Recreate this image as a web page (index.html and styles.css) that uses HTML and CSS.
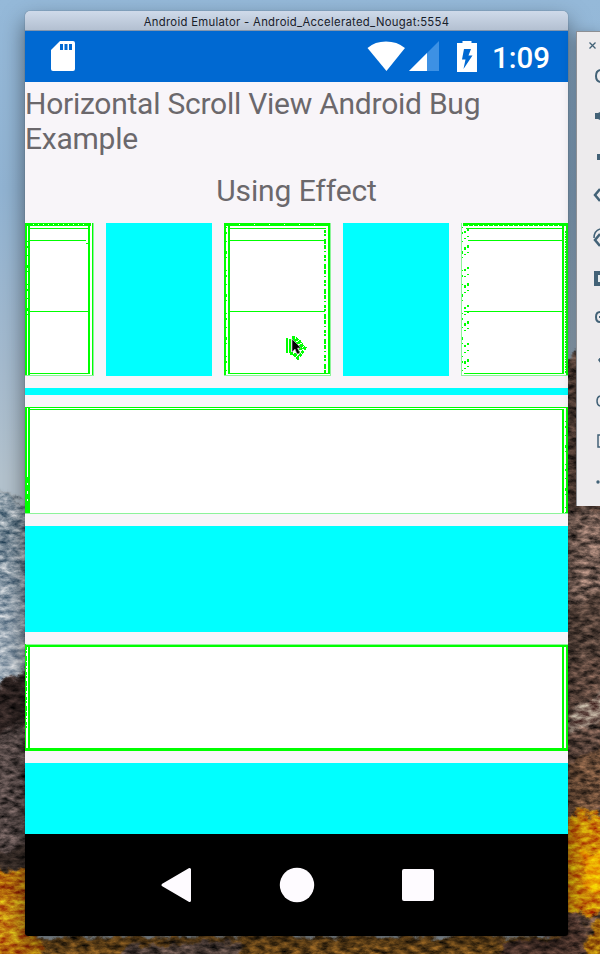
FILE: index.html
```html
<!DOCTYPE html>
<html lang="en">
<head>
<meta charset="utf-8">
<title>Android Emulator</title>
<link rel="stylesheet" href="styles.css">
</head>
<body>
<div class="desktop">
  <svg class="wallpaper" width="600" height="954" viewBox="0 0 600 954" aria-hidden="true">
    <defs>
      <linearGradient id="sky" x1="0" y1="0" x2="0" y2="1">
        <stop offset="0" stop-color="#95b9d9"/><stop offset=".2" stop-color="#91b3d2"/><stop offset=".38" stop-color="#a4bace"/><stop offset=".5" stop-color="#b3c2cd"/>
      </linearGradient>
      <linearGradient id="snow" x1="0" y1="0" x2="0" y2="1">
        <stop offset="0" stop-color="#a3b2bd"/><stop offset=".2" stop-color="#82939f"/><stop offset=".6" stop-color="#96a5b2"/><stop offset="1" stop-color="#b0bbc5"/>
      </linearGradient>
      <filter id="rough" x="0" y="0" width="100%" height="100%" color-interpolation-filters="sRGB">
        <feTurbulence type="fractalNoise" baseFrequency=".1 .2" numOctaves="5" seed="7"/>
        <feColorMatrix values="1.1 0 0 0 -.08  1.1 0 0 0 -.08  1.1 0 0 0 -.08  0 0 0 0 1" result="n"/>
        <feGaussianBlur in="SourceGraphic" stdDeviation="1.500" result="s"/>
        <feTurbulence type="fractalNoise" baseFrequency=".07" numOctaves="3" seed="3" result="w"/>
        <feDisplacementMap in="s" in2="w" scale="18" xChannelSelector="R" yChannelSelector="G" result="d"/>
        <feComposite in="n" in2="d" operator="in" result="m"/>
        <feBlend in="m" in2="d" mode="overlay"/>
      </filter>
    </defs>
    <rect width="600" height="954" fill="url(#sky)"/>
    <g filter="url(#rough)">
      <path d="M-20 478L10 496L35 514V700H-20Z" fill="url(#snow)"/>
      <path d="M-20 693L12 680L25 669L40 660V974H-20Z" fill="#574a48"/>
      <path d="M-20 695L12 682L25 674L40 670V720L-20 740Z" fill="#302523"/>
      <path d="M-20 850L40 845V870H-20Z" fill="#382d28"/>
      <path d="M550 375L569 362L576 352L620 335V974H550Z" fill="#60493f"/>
      <path d="M558 510H620V590L558 615Z" fill="#7a6258"/>
      <path d="M558 616L620 580V650L558 670Z" fill="#57443b"/>
      <path d="M558 725L620 675V710L558 740Z" fill="#907c70"/>
      <path d="M558 765L620 735V805L558 820Z" fill="#70503a"/>
      <path d="M-20 936H620V974H-20Z" fill="#7d541e"/>
      <path d="M-20 866L14 871L40 869V974H-20Z" fill="#b9700d"/>
      <path d="M-20 910L35 895V940L-20 950Z" fill="#c88612"/>
      <path d="M558 822L582 812L620 820V905L588 917L558 908Z" fill="#cf8809"/>
      <path d="M584 855L620 835V897L584 890Z" fill="#edab03"/>
      <path d="M130 946L240 940V974H100Z" fill="#5e4c45"/>
      <path d="M558 912L582 912L586 974H500V940H558Z" fill="#51382f"/>
      <path d="M588 925L620 910V974H584Z" fill="#a56c0b"/>
    </g>
  </svg>

  <main class="window">
    <header class="titlebar">Android Emulator - Android_Accelerated_Nougat:5554</header>
    <div class="status">
      <svg class="sd" width="24" height="30" viewBox="0 0 24 30"><path fill="#fff" d="M9 0H22Q24 0 24 2V28Q24 30 22 30H2Q0 30 0 28V9Z"/><path fill="#0069d2" d="M9 3h3v6H9zm4.500 0h3v6h-3zM18 3h3v6h-3z"/></svg>
      <svg class="wifi" width="38" height="30" viewBox="0 0 38 30"><path fill="#fff" d="M.5 7Q8 .5 19 .5T38 7L19.500 30Z"/></svg>
      <svg class="cell" width="30" height="30" viewBox="0 0 30 30"><path fill="#3d91e4" d="M30 0V30H0Z"/><path fill="#fff" d="M18 12V30H0Z"/></svg>
      <svg class="battery" width="20" height="31" viewBox="0 0 20 31"><path fill="#fff" d="M5.500 0H14.500V2H20V31H0V2H5.500Z"/><path fill="#0069d2" d="M7 8H14L11.500 14.500H15.500L6.500 28L8.500 18.500H5Z"/></svg>
      <span class="clock">1:09</span>
    </div>
    <section class="screen">
      <h1 class="heading">Horizontal Scroll View Android Bug Example</h1>
      <h2 class="subheading">Using Effect</h2>
      <div class="tiles">
        <svg class="card" width="69" height="153" viewBox="0 0 69 153">
          <rect class="paper" width="69" height="153"/>
          <path class="pale" d="M68.500 0V152.500H0"/>
          <path class="line" d="M67.500 0V152M3 5.500H64M5 17.500H61M61 20.500H64M3 88.500H64M4 150.500H65"/>
          <path class="bold" d="M1 0V152M4 1V152M64 1V151"/>
          <path class="thick" d="M0 1.500H66"/>
          <path class="nick" d="M8 1.500H62"/>
          <path class="flecks" d="M2.500 18V92"/>
        </svg>
        <div class="aqua tile"></div>
        <svg class="card" width="107" height="153" viewBox="0 0 107 153">
          <rect class="paper" width="107" height="153"/>
          <path class="pale" d="M106.500 0V152.500H0V0"/>
          <path class="line" d="M4 5.500H102M4 17.500H102M4 88.500H101M4 150.500H105"/>
          <path class="bold" d="M1 0V152M5 1V151M105 0V151"/>
          <path class="thick" d="M0 1.500H106"/>
          <path class="nick wide" d="M15 1.500H100"/>
          <path class="flecks" d="M2.500 4V151"/>
          <path class="bold broken" d="M101 7V150"/>
          <g class="pointer">
            <path class="bold" d="M63 115V130M66 116V130"/>
            <path class="halo" d="M68 114L71 115L76 119L79 124L83 126M66 130L70 131L74 135L78 130L80 126M69 117L78 124L73 130"/>
            <path class="arrow" d="M68 116V129L71 126L73 131L76 130L73.500 125H77Z"/>
          </g>
        </svg>
        <div class="aqua tile"></div>
        <svg class="card" width="107" height="153" viewBox="0 0 107 153">
          <rect class="paper" width="107" height="153"/>
          <path class="pale" d="M.5 0V152.500H107"/>
          <path class="line" d="M5 5.500H101M7 17.500H101M3 88.500H102M3 150.500H102"/>
          <path class="bold" d="M102 1V151M106 0V152"/>
          <path class="thick" d="M2 1.500H107"/>
          <path class="nick" d="M7 2.500H98"/>
          <path class="flecks" d="M1.500 4V151"/>
          <path class="flecks second" d="M4 8V151M6.500 6V145"/>
          <path class="dots" d="M104.500 8V150"/>
        </svg>
      </div>
      <div class="aqua strip"></div>
      <svg class="card" width="543" height="107" viewBox="0 0 543 107">
        <rect class="paper" width="543" height="107"/>
        <path class="pale" d="M0 106.500H543"/>
        <path class="line" d="M0 .5H543M5 2.500H537"/>
        <path class="bold" d="M1 0V106M4 1V106M538 2V106M542 0V106"/>
        <path class="line" d="M2.500 70V76M2.500 78V84M2.500 87V92M2.500 94V106"/>
        <path class="flecks" d="M540.500 14V106"/>
      </svg>
      <div class="aqua block"></div>
      <svg class="card" width="543" height="107" viewBox="0 0 543 107">
        <rect class="paper" width="543" height="107"/>
        <path class="pale" d="M0 .5H543"/>
        <path class="line" d="M.5 0V107"/>
        <path class="bold" d="M0 2H542M4 2V105M538 2V105M542 1V107M0 105H542"/>
        <path class="line" d="M0 106.500H542"/>
        <path class="line broken" d="M1.500 3V86"/>
      </svg>
      <div class="aqua last"></div>
    </section>
    <nav class="navbar">
      <svg width="32" height="36" viewBox="0 0 32 36"><path fill="#fefbff" stroke="#fefbff" stroke-width="3" stroke-linejoin="round" d="M3 18L29.500 2.500V33.500Z"/></svg>
      <svg width="36" height="36" viewBox="0 0 36 36"><circle cx="18" cy="18" r="17.200" fill="#fefbff"/></svg>
      <svg width="32" height="36" viewBox="0 0 32 36"><rect y="2" width="32" height="32" rx="2" fill="#fefbff"/></svg>
    </nav>
  </main>

  <aside class="tools">
    <svg width="23" height="474" viewBox="577 32 23 474" fill="none" stroke="#436277" stroke-width="2">
      <path d="M589.500 42.500L595.500 48.500M595.500 42.500L589.500 48.500" stroke-width="1.300"/>
      <path d="M600 70Q596 71 596 76T600 82"/>
      <path d="M595 113H598L600 112V120L598 119H595ZM597 154H600V160H597Z" fill="#436277" stroke="none"/>
      <path d="M600 189L595 195L600 201" stroke-width="2.500"/>
      <path d="M600 229Q594 231 594 238" stroke-width="1.500"/><path d="M600 234L595 240L600 246" stroke-width="2.500"/>
      <path d="M594 271H600V286H594Z" fill="#436277" stroke="none"/><path d="M598 275H600V282H598Z" fill="#e8edee" stroke="none"/>
      <path d="M600 312Q596 312 596 317T600 322M599 317H600"/>
      <path d="M601 356L598 360L601 364" fill="#436277" stroke="none"/>
      <path d="M600 396Q597 397 597 401T600 406M600 435H598V447H600" stroke-width="1.500"/>
      <circle cx="598" cy="482" r="1.700" fill="#436277" stroke="none"/>
    </svg>
  </aside>
</div>
</body>
</html>
```
FILE: styles.css
```css
body {
  margin: 0;
}

.desktop {
  position: relative;
  display: flex;
  gap: 8px;
  box-sizing: border-box;
  width: 600px;
  height: 954px;
  padding: 11px 0 0 25px;
  overflow: hidden;
}

.wallpaper {
  position: absolute;
  inset: 0;
}

.window {
  position: relative;
  display: flex;
  flex: none;
  flex-direction: column;
  width: 543px;
  height: 925px;
  border-radius: 5px 5px 3px 3px;
  font-family: Roboto, sans-serif;
  box-shadow: 0 10px 22px rgba(0, 0, 0, .5), 0 0 1px rgba(0, 0, 0, .6);
}

.titlebar {
  box-sizing: border-box;
  height: 20px;
  padding-top: 1px;
  border-bottom: 1px solid #8396ad;
  border-radius: 5px 5px 0 0;
  background: linear-gradient(#cfdaea, #b3c0d1);
  color: #18202a;
  font: 11.300px/20px Inter, sans-serif;
  letter-spacing: .3px;
  text-align: center;
}

.status {
  display: flex;
  box-sizing: border-box;
  height: 51px;
  padding: 10px 18px 0 26px;
  background: #0069d2;
}

.wifi {
  margin-left: 292px;
}

.cell {
  margin-left: 4px;
}

.battery {
  margin-left: 18px;
}

.clock {
  margin-left: 15px;
  color: #fff;
  font-size: 29.500px;
  font-weight: 500;
  line-height: 34px;
}

.screen {
  display: flex;
  flex-direction: column;
  height: 752px;
  background: #f8f5f9;
}

.heading,
.subheading {
  margin: 0;
  color: #6b686c;
  font-size: 30px;
  font-weight: 400;
}

.heading {
  height: 74px;
  padding-top: 5px;
  letter-spacing: -.25px;
  line-height: 34.500px;
}

.subheading {
  height: 62px;
  letter-spacing: -.1px;
  line-height: 60px;
  text-align: center;
}

.tiles {
  display: flex;
  justify-content: space-between;
  height: 153px;
}

.card {
  display: block;
  flex: none;
  fill: none;
  stroke: #0f0;
  shape-rendering: crispEdges;
}

.paper {
  fill: #fff;
  stroke: none;
}

.pale {
  stroke: #8df39a;
}

.bold {
  stroke-width: 2;
}

.thick {
  stroke-width: 3;
}

.nick {
  stroke: #fff;
  stroke-dasharray: 1 4;
}

.nick.wide {
  stroke-dasharray: 1 14;
}

.flecks {
  stroke-dasharray: 1 4 2 7 1 9 3 3 1 12;
}

.flecks.second {
  stroke-width: 2;
  stroke-dasharray: 2 5 1 8 3 4 1 14;
}

.broken {
  stroke-dasharray: 3 1 2 3 5 1 4 2 1 3;
}

.dots {
  stroke-dasharray: 2 1 1 1;
}

.halo {
  stroke-width: 3;
  stroke-dasharray: 3 1;
}

.arrow {
  fill: #000;
  stroke: #aaa;
  stroke-width: .7px;
  shape-rendering: auto;
}

.aqua {
  background: #0ff;
}

.tile {
  width: 106px;
}

.strip {
  height: 7px;
  margin: 12px 0;
}

.block {
  height: 106px;
  margin: 12px 0;
}

.last {
  flex: 1;
  margin-top: 12px;
}

.navbar {
  display: flex;
  gap: 87px;
  align-items: center;
  box-sizing: border-box;
  height: 102px;
  padding-left: 134.500px;
  border-radius: 0 0 3px 3px;
  background: #000;
}

.tools {
  position: relative;
  box-sizing: border-box;
  width: 24px;
  height: 475px;
  margin-top: 20px;
  border: solid #8d8f94;
  border-width: 1px 0 0 1px;
  background: #edebed;
  box-shadow: 0 4px 14px rgba(0, 0, 0, .35);
}
```
